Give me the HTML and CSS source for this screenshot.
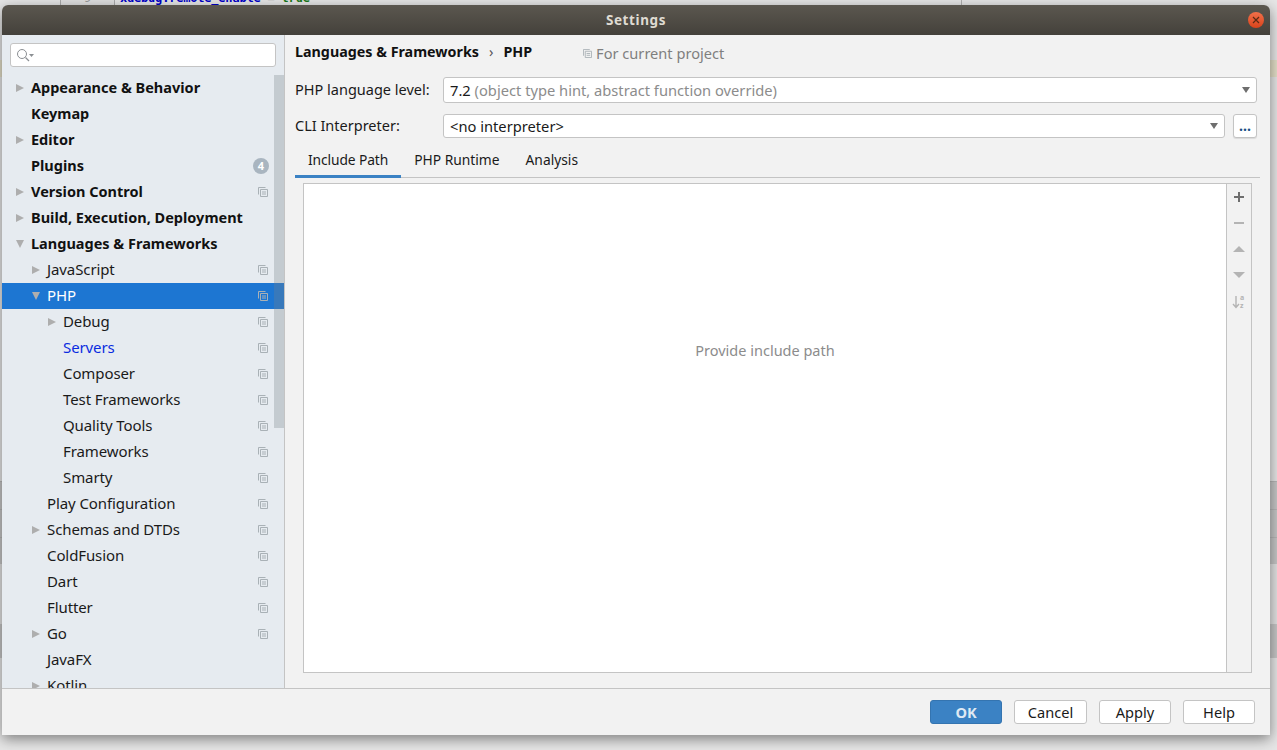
FILE: index.html
```html
<!DOCTYPE html>
<html lang="en">
<head>
    <meta charset="UTF-8" />
    <title>Settings</title>
    <link rel="stylesheet" href="styles.css">
</head>
<body>
    <svg class="defs" width="0" height="0">
        <symbol id="copy" viewBox="0 0 10 10">
            <path d="M0.5 7.5V0.5H7.5" fill="none" stroke="currentColor" />
            <path d="M2.5 2.5H9.5V9.5H2.5Z M4 5H8 M4 7H8" fill="none" stroke="currentColor" />
        </symbol>
    </svg>

    <div class="editor-strip">
        <span class="gutter">9</span>
        <span class="code"><b>xdebug.remote_enable</b> <i>=</i> <em>true</em></span>
    </div>

    <div class="dialog">
        <div class="titlebar">
            <span>Settings</span>
            <button class="close">
                <svg width="8" height="8" viewBox="0 0 8 8"><path d="M1 1L7 7M7 1L1 7" stroke="#5a2a14" stroke-width="1.2" /></svg>
            </button>
        </div>

        <div class="content">
            <aside class="sidebar">
                <div class="search">
                    <svg width="18" height="14" viewBox="0 0 18 14">
                        <circle cx="6" cy="6" r="4.5" fill="none" stroke="#8b8f93" />
                        <path d="M9.5 9.5L13 13" stroke="#8b8f93" stroke-width="1.3" />
                        <path d="M13 6H18L15.5 9Z" fill="#8b8f93" />
                    </svg>
                </div>
                <div class="tree">
                    <div class="row bold"><i class="arrow"></i>Appearance &amp; Behavior</div>
                    <div class="row bold"><i class="arrow none"></i>Keymap</div>
                    <div class="row bold"><i class="arrow"></i>Editor</div>
                    <div class="row bold"><i class="arrow none"></i>Plugins<span class="badge">4</span></div>
                    <div class="row bold"><i class="arrow"></i>Version Control<svg class="copy"><use href="#copy" /></svg></div>
                    <div class="row bold"><i class="arrow"></i>Build, Execution, Deployment</div>
                    <div class="row bold"><i class="arrow open"></i>Languages &amp; Frameworks</div>
                    <div class="row lvl1"><i class="arrow"></i>JavaScript<svg class="copy"><use href="#copy" /></svg></div>
                    <div class="row lvl1 selected"><i class="arrow open"></i>PHP<svg class="copy"><use href="#copy" /></svg></div>
                    <div class="row lvl2"><i class="arrow"></i>Debug<svg class="copy"><use href="#copy" /></svg></div>
                    <div class="row lvl2 link"><i class="arrow none"></i>Servers<svg class="copy"><use href="#copy" /></svg></div>
                    <div class="row lvl2"><i class="arrow none"></i>Composer<svg class="copy"><use href="#copy" /></svg></div>
                    <div class="row lvl2"><i class="arrow none"></i>Test Frameworks<svg class="copy"><use href="#copy" /></svg></div>
                    <div class="row lvl2"><i class="arrow none"></i>Quality Tools<svg class="copy"><use href="#copy" /></svg></div>
                    <div class="row lvl2"><i class="arrow none"></i>Frameworks<svg class="copy"><use href="#copy" /></svg></div>
                    <div class="row lvl2"><i class="arrow none"></i>Smarty<svg class="copy"><use href="#copy" /></svg></div>
                    <div class="row lvl1"><i class="arrow none"></i>Play Configuration<svg class="copy"><use href="#copy" /></svg></div>
                    <div class="row lvl1"><i class="arrow"></i>Schemas and DTDs<svg class="copy"><use href="#copy" /></svg></div>
                    <div class="row lvl1"><i class="arrow none"></i>ColdFusion<svg class="copy"><use href="#copy" /></svg></div>
                    <div class="row lvl1"><i class="arrow none"></i>Dart<svg class="copy"><use href="#copy" /></svg></div>
                    <div class="row lvl1"><i class="arrow none"></i>Flutter<svg class="copy"><use href="#copy" /></svg></div>
                    <div class="row lvl1"><i class="arrow"></i>Go<svg class="copy"><use href="#copy" /></svg></div>
                    <div class="row lvl1"><i class="arrow none"></i>JavaFX</div>
                    <div class="row lvl1"><i class="arrow"></i>Kotlin</div>
                </div>
                <div class="scrollbar"></div>
            </aside>

            <main class="main">
                <div class="crumbs">
                    <b>Languages &amp; Frameworks</b>
                    <span class="sep">›</span>
                    <b>PHP</b>
                    <span class="scope"><svg class="copy"><use href="#copy" /></svg>For current project</span>
                </div>

                <div class="field level">
                    <label>PHP language level:</label>
                    <div class="select">7.2&nbsp;<span class="hint">(object type hint, abstract function override)</span><i class="caret"></i></div>
                </div>
                <div class="field cli">
                    <label>CLI Interpreter:</label>
                    <div class="select">&lt;no interpreter&gt;<i class="caret"></i></div>
                    <button class="more">...</button>
                </div>

                <div class="tabs">
                    <div class="tab active">Include Path</div>
                    <div class="tab">PHP Runtime</div>
                    <div class="tab">Analysis</div>
                </div>

                <div class="panel">
                    <div class="empty">Provide include path</div>
                    <div class="tools">
                        <svg width="12" height="12" viewBox="0 0 12 12"><path d="M6 1V11M1 6H11" stroke="#6e6e6e" stroke-width="2" /></svg>
                        <svg width="12" height="12" viewBox="0 0 12 12"><path d="M1 6H11" stroke="#b4b4b4" stroke-width="2" /></svg>
                        <svg width="12" height="12" viewBox="0 0 12 12"><path d="M0 9L6 3L12 9Z" fill="#b4b4b4" /></svg>
                        <svg width="12" height="12" viewBox="0 0 12 12"><path d="M0 3H12L6 9Z" fill="#b4b4b4" /></svg>
                        <svg width="14" height="14" viewBox="0 0 14 14">
                            <path d="M4 1V12M1 9L4 12.5L7 9" fill="none" stroke="#b4b4b4" stroke-width="1.4" />
                            <text x="8" y="5" class="az">a</text>
                            <text x="8" y="13" class="az">z</text>
                        </svg>
                    </div>
                </div>
            </main>
        </div>

        <div class="footer">
            <button class="btn primary">OK</button>
            <button class="btn wide">Cancel</button>
            <button class="btn">Apply</button>
            <button class="btn">Help</button>
        </div>
    </div>
</body>
</html>
```

FILE: styles.css
```css
* {
    box-sizing: border-box;
}
html, body {
    height: 100%;
}
body {
    margin: 0;
    height: 750px;
    overflow: hidden;
    position: relative;
    font-family: "Noto Sans", sans-serif;
    font-size: 14px;
    color: #1a1a1a;
    background:
        linear-gradient(#b0b0b0, #b0b0b0) 961px 0 / 1px 5px no-repeat,
        linear-gradient(to bottom,
        #e6e6e6 0, #e6e6e6 60px,
        #e4dfc8 60px, #e4dfc8 77px,
        #e6e6e6 77px, #e6e6e6 481px,
        #a8a8a8 481px, #c6c6c6 482px, #c6c6c6 509px,
        #a8a8a8 509px, #c6c6c6 510px, #c6c6c6 537px,
        #a8a8a8 537px, #c6c6c6 538px, #c6c6c6 563px,
        #a8a8a8 563px, #e2e2e2 564px, #e2e2e2 624px,
        #c6c6c6 624px, #c6c6c6 657px,
        #a8a8a8 657px, #e6e6e6 658px);
}
.defs {
    position: absolute;
}

/* editor behind the dialog */
.editor-strip {
    position: absolute;
    top: -9px;
    left: 60px;
    display: flex;
    font-family: "DejaVu Sans Mono", monospace;
    font-size: 12px;
    line-height: 14px;
    letter-spacing: -0.2px;
}
.gutter {
    width: 55px;
    text-align: center;
    color: #999;
    background: #e0e0e0;
    border-left: 1px solid #aaa;
    border-right: 1px solid #aaa;
    height: 14px;
}
.code {
    padding-left: 5px;
    font-weight: bold;
}
.code b {
    color: #0000c8;
}
.code i {
    color: #aaa;
    font-style: normal;
}
.code em {
    color: #1a7a1a;
    font-style: normal;
}

.dialog {
    position: absolute;
    left: 2px;
    top: 5px;
    width: 1268px;
    height: 730px;
    display: flex;
    flex-direction: column;
    background: #f2f2f2;
    border-radius: 6px 6px 0 0;
    box-shadow: 0 4px 14px rgba(0, 0, 0, 0.45);
}

.titlebar {
    height: 30px;
    flex: none;
    display: flex;
    align-items: center;
    justify-content: center;
    position: relative;
    background: linear-gradient(#5b574f, #44413b);
    border-radius: 6px 6px 0 0;
    color: #dfdbd2;
    font-weight: 700;
    font-size: 13.5px;
    letter-spacing: 0.6px;
}
.close {
    position: absolute;
    right: 6px;
    top: 7px;
    width: 16px;
    height: 16px;
    padding: 0;
    border: none;
    border-radius: 50%;
    display: flex;
    align-items: center;
    justify-content: center;
    background: linear-gradient(#f2704a, #d8431b);
}

.content {
    flex: 1;
    display: flex;
    min-height: 0;
}

/* sidebar */
.sidebar {
    width: 283px;
    flex: none;
    position: relative;
    background: #e6ebf0;
    border-right: 1px solid #c4c4c4;
    overflow: hidden;
    display: flex;
    flex-direction: column;
}
.search {
    margin: 8px;
    width: 266px;
    height: 24px;
    flex: none;
    background: #fff;
    border: 1px solid #c4c4c4;
    border-radius: 3px;
    padding: 4px 0 0 5px;
    display: flex;
}
.tree {
    flex: 1;
    overflow: hidden;
}
.row {
    height: 26px;
    display: flex;
    align-items: center;
    padding: 0 16px 2px 13px;
    white-space: nowrap;
    font-size: 15px;
    letter-spacing: -0.1px;
}
.row.bold {
    font-size: 14.5px;
    font-weight: 700;
    letter-spacing: 0;
    color: #111;
}
.row.lvl1 {
    padding-left: 29px;
}
.row.lvl2 {
    padding-left: 45px;
}
.row.link {
    color: #0a2be0;
}
.row.selected {
    background: #1d76d2;
    color: #fff;
}
.arrow {
    width: 16px;
    flex: none;
    height: 9px;
    display: block;
    position: relative;
}
.arrow::before {
    content: "";
    position: absolute;
    left: 1px;
    top: 1px;
    border-left: 8px solid #aeaeae;
    border-top: 4.5px solid transparent;
    border-bottom: 4.5px solid transparent;
}
.arrow.open::before {
    left: 1px;
    top: 1px;
    border-top: 8px solid #aeaeae;
    border-left: 4.5px solid transparent;
    border-right: 4.5px solid transparent;
    border-bottom: none;
}
.arrow.none::before {
    display: none;
}
.copy {
    width: 10px;
    height: 10px;
    margin-left: auto;
    margin-top: 2px;
    color: #a9b1b6;
    flex: none;
}
.badge {
    margin-left: auto;
    margin-right: -1px;
    margin-top: 2px;
    width: 16px;
    height: 16px;
    border-radius: 50%;
    background: #a9b5c0;
    color: #fff;
    font-size: 11px;
    line-height: 16px;
    text-align: center;
}
.scrollbar {
    position: absolute;
    right: 0;
    top: 40px;
    width: 10px;
    height: 353px;
    background: rgba(120, 130, 135, 0.3);
}

/* right pane */
.main {
    flex: 1;
    min-width: 0;
    padding: 0 13px 0 10px;
    display: flex;
    flex-direction: column;
    font-size: 14.5px;
}
.crumbs {
    height: 42px;
    padding-bottom: 10px;
    display: flex;
    align-items: center;
    flex: none;
    font-size: 14.3px;
}
.crumbs b {
    color: #111;
}
.sep {
    margin: 0 10px;
    color: #555;
}
.scope {
    margin-left: 51px;
    margin-top: 4px;
    display: flex;
    align-items: center;
    gap: 4px;
    font-size: 14.6px;
    color: #7f7f7f;
}
.scope .copy {
    margin-left: 0;
    margin-top: 0;
    width: 9px;
    height: 9px;
}
.field {
    display: flex;
    align-items: center;
    flex: none;
}
.field.level {
    height: 26px;
}
.field.cli {
    height: 24px;
    margin-top: 11px;
}
.field label {
    width: 148px;
    flex: none;
    padding-bottom: 2px;
}
.select {
    flex: 1;
    height: 100%;
    background: #fff;
    border: 1px solid #c4c4c4;
    border-radius: 3px;
    padding-left: 6px;
    display: flex;
    align-items: center;
    position: relative;
    white-space: pre;
    font-size: 14.7px;
}
.hint {
    color: #8c8c8c;
}
.caret {
    position: absolute;
    right: 6px;
    top: 50%;
    margin-top: -3px;
    border-top: 6px solid #6e6e6e;
    border-left: 4.5px solid transparent;
    border-right: 4.5px solid transparent;
}
.more {
    width: 24px;
    height: 24px;
    margin-left: 8px;
    padding: 0 0 2px;
    background: #fff;
    border: 1px solid #c4c4c4;
    border-radius: 3px;
    box-shadow: 0 1px 1px rgba(0, 0, 0, 0.1);
    font: 700 14px "Noto Sans", sans-serif;
    color: #1a4f86;
}
.tabs {
    margin-top: 9px;
    margin-right: -3px;
    height: 31px;
    flex: none;
    display: flex;
    border-bottom: 1px solid #c4c4c4;
    font-size: 13.8px;
}
.tab {
    padding: 3px 13px 0;
    height: 31px;
}
.tab.active {
    border-bottom: 3px solid #3b82c4;
    letter-spacing: -0.1px;
}
.panel {
    margin: 5px 5px 0 8px;
    height: 490px;
    flex: none;
    display: flex;
    background: #fff;
    border: 1px solid #c4c4c4;
}
.empty {
    flex: 1;
    text-align: center;
    padding-top: 156px;
    color: #8c8c8c;
}
.tools {
    width: 25px;
    flex: none;
    background: #f2f2f2;
    border-left: 1px solid #c4c4c4;
    display: flex;
    flex-direction: column;
    align-items: center;
    padding-top: 7px;
    gap: 14px;
}
.az {
    font-size: 7px;
    font-weight: 700;
    fill: #b4b4b4;
}

/* buttons */
.footer {
    height: 47px;
    flex: none;
    border-top: 1px solid #c4c4c4;
    display: flex;
    justify-content: flex-end;
    align-items: center;
    gap: 12px;
    padding-right: 15px;
}
.btn {
    width: 72px;
    height: 24px;
    padding: 0;
    background: #fff;
    border: 1px solid #c4c4c4;
    border-radius: 3px;
    font: 14.6px "Noto Sans", sans-serif;
    color: #1a1a1a;
}
.btn.wide {
    width: 73px;
}
.btn.primary {
    background: #3b82c4;
    border-color: #3474b0;
    color: #dfe9f3;
    font-weight: 700;
}
```
